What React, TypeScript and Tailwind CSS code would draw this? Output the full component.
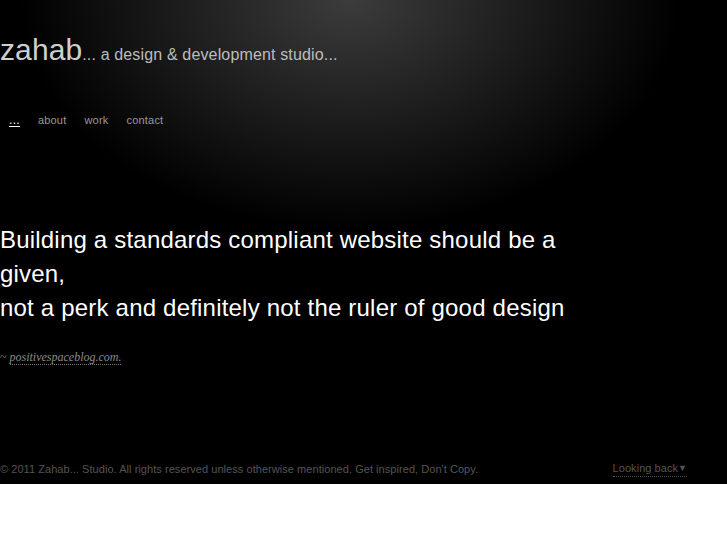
export default function App() {
  const navItems = ["about", "work", "contact"];

  return (
    <main className="bg-white min-h-screen font-['Liberation_Sans',Arial,sans-serif]">
      <div className="h-[484px] flex flex-col bg-black bg-[radial-gradient(ellipse_330px_230px_at_350px_0px,#3c3c3c,#000)]">
        <header className="pt-[35px] flex items-baseline">
          <h1 className="text-[30px] leading-none text-[#cfcfcf] tracking-[0.1px]">zahab</h1>
          <p className="text-[16px] leading-none text-[#bdbdbd] tracking-[0.15px]">
            ... a design &amp; development studio...
          </p>
        </header>

        <nav className="mt-[48px] flex text-[11px] leading-[14px]">
          <a className="px-[9px] text-white underline decoration-1 underline-offset-2 text-[12px] tracking-[0.3px]" href="#">
            ...
          </a>
          {navItems.map((item) => (
            <a key={item} className="px-[9px] text-[#999999] tracking-[0.2px]" href="#">
              {item}
            </a>
          ))}
        </nav>

        <blockquote className="mt-[96px] w-[600px] text-[24px] leading-[34px] text-white tracking-[0.2px]">
          Building a standards compliant website should be a given,
          <br />
          not a perk and definitely not the ruler of good design
        </blockquote>

        <p className="mt-[23px] text-[12px] text-[#8a8a8a] font-['Liberation_Serif',Georgia,serif]">
          ~{" "}
          <a className="italic border-b border-dotted border-[#777]" href="#">
            positivespaceblog.com.
          </a>
        </p>

        <footer className="mt-auto mb-[7px] flex items-center text-[11px] text-[#555555] tracking-[0.05px]">
          <p className="flex-1">
            © 2011 Zahab... Studio. All rights reserved unless otherwise mentioned. Get inspired, Don't Copy.
          </p>
          <a className="mr-[40px] border-b border-dotted border-[#555] leading-[15px] flex items-center" href="#">
            Looking back<span className="text-[9px] leading-none">▼</span>
          </a>
        </footer>
      </div>
    </main>
  );
}
